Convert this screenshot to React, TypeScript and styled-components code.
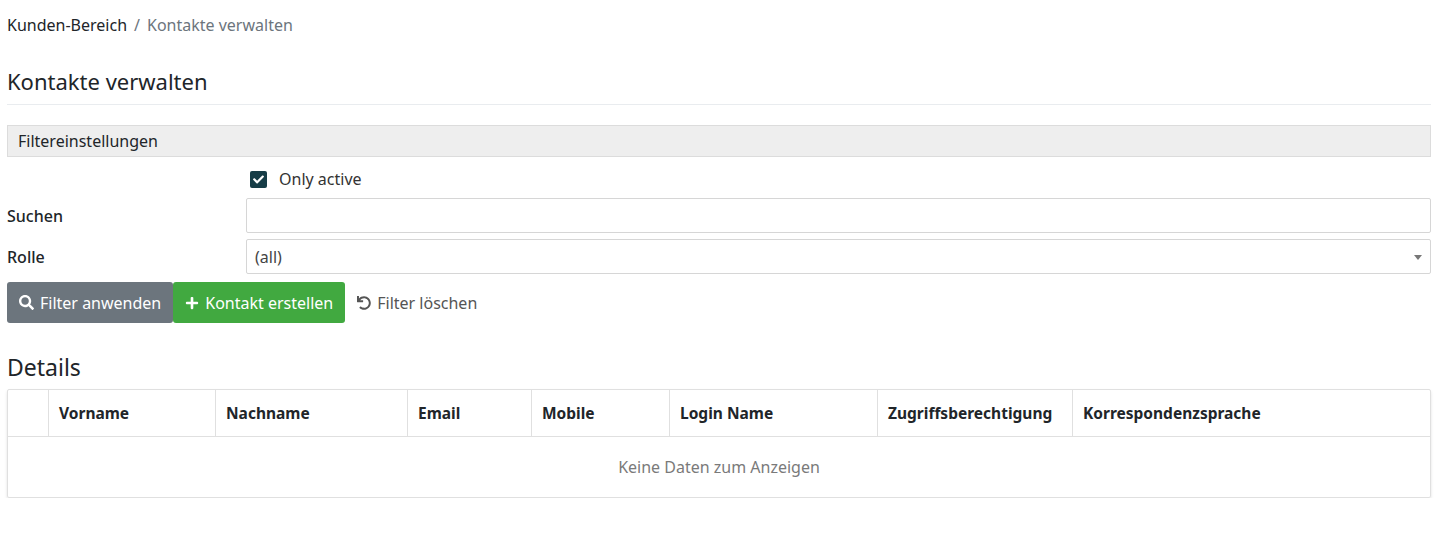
import React from 'react';
import styled, { createGlobalStyle } from 'styled-components';
import { FaSearch, FaPlus, FaUndo, FaCheck } from 'react-icons/fa';

const Global = createGlobalStyle`
  body { margin: 0; font-family: "Noto Sans", "Open Sans", sans-serif; color: #212529; background: #fff; }
  * { box-sizing: border-box; }
`;

const Page = styled.div`
  padding: 0 4px 0 7px;
`;

const Crumbs = styled.div`
  height: 50px;
  display: flex;
  align-items: center;
  font-size: 16px;
  gap: 7px;
  span.sep { color: #6c757d; }
  span.cur { color: #6c757d; }
`;

const Title = styled.h1`
  margin: 16px 0 0;
  font-size: 22px;
  font-weight: 400;
  padding-bottom: 8px;
  border-bottom: 1px solid #e9ecef;
`;

const SectionBar = styled.div`
  margin-top: 20px;
  background: #eeeeee;
  border: 1px solid #dcdcdc;
  height: 32px;
  display: flex;
  align-items: center;
  padding-left: 10px;
  font-size: 16px;
`;

const FormRow = styled.div<{ $h?: number }>`
  display: grid;
  grid-template-columns: 239px 1fr;
  align-items: center;
  min-height: ${p => p.$h ?? 41}px;
  font-size: 16px;
  font-weight: 500;
`;

const Check = styled.label`
  display: flex;
  align-items: center;
  gap: 12px;
  font-weight: 400;
  padding-left: 4px;
  color: #333;
`;

const Box = styled.span`
  width: 17px;
  height: 17px;
  border-radius: 2px;
  background: #163d47;
  color: #fff;
  display: flex;
  align-items: center;
  justify-content: center;
  font-size: 11px;
`;

const Input = styled.div`
  height: 35px;
  border: 1px solid #d6d6d6;
  border-radius: 2px;
  display: flex;
  align-items: center;
  padding: 0 8px;
  font-weight: 400;
  color: #444;
  position: relative;
`;

const Caret = styled.span`
  position: absolute;
  right: 8px;
  top: 15px;
  border-left: 4px solid transparent;
  border-right: 4px solid transparent;
  border-top: 5px solid #777;
`;

const Actions = styled.div`
  display: flex;
  align-items: center;
  margin-top: 5px;
`;

const Btn = styled.button<{ $bg: string }>`
  height: 41px;
  border: none;
  border-radius: 3px;
  background: ${p => p.$bg};
  color: #fff;
  font: inherit;
  font-size: 16px;
  padding: 0 12px;
  display: flex;
  align-items: center;
  gap: 6px;
`;

const LinkBtn = styled.span`
  display: flex;
  align-items: center;
  gap: 6px;
  color: #555;
  font-size: 16px;
  margin-left: 12px;
`;

const H2 = styled.h2`
  margin: 28px 0 6px;
  font-size: 23px;
  font-weight: 400;
`;

const Table = styled.div`
  border: 1px solid #e0e0e0;
  border-radius: 2px;
  box-shadow: 0 2px 3px rgba(0,0,0,0.12);
`;

const HeadRow = styled.div`
  display: grid;
  grid-template-columns: 40px 167px 192px 124px 138px 208px 195px 1fr;
  height: 47px;
  border-bottom: 1px solid #e0e0e0;
`;

const Th = styled.div`
  display: flex;
  align-items: center;
  padding-left: 10px;
  font-weight: 700;
  font-size: 15.5px;
  border-left: 1px solid #e0e0e0;
  &:first-child { border-left: none; }
`;

const Empty = styled.div`
  height: 60px;
  display: flex;
  align-items: center;
  justify-content: center;
  color: #7a7a7a;
  font-size: 16px;
`;

const cols = ['', 'Vorname', 'Nachname', 'Email', 'Mobile', 'Login Name', 'Zugriffsberechtigung', 'Korrespondenzsprache'];

export default function App() {
  return (
    <Page>
      <Global />
      <Crumbs>
        <span>Kunden-Bereich</span>
        <span className="sep">/</span>
        <span className="cur">Kontakte verwalten</span>
      </Crumbs>
      <Title>Kontakte verwalten</Title>
      <SectionBar>Filtereinstellungen</SectionBar>
      <FormRow $h={44}>
        <span />
        <Check><Box><FaCheck /></Box>Only active</Check>
      </FormRow>
      <FormRow style={{ marginTop: -6 }}>
        <span>Suchen</span>
        <Input />
      </FormRow>
      <FormRow>
        <span>Rolle</span>
        <Input>(all)<Caret /></Input>
      </FormRow>
      <Actions>
        <Btn $bg="#6c757d"><FaSearch size={15} />Filter anwenden</Btn>
        <Btn $bg="#41a940"><FaPlus size={14} />Kontakt erstellen</Btn>
        <LinkBtn><FaUndo size={14} />Filter löschen</LinkBtn>
      </Actions>
      <H2>Details</H2>
      <Table>
        <HeadRow>
          {cols.map((c, i) => <Th key={i}>{c}</Th>)}
        </HeadRow>
        <Empty>Keine Daten zum Anzeigen</Empty>
      </Table>
    </Page>
  );
}
